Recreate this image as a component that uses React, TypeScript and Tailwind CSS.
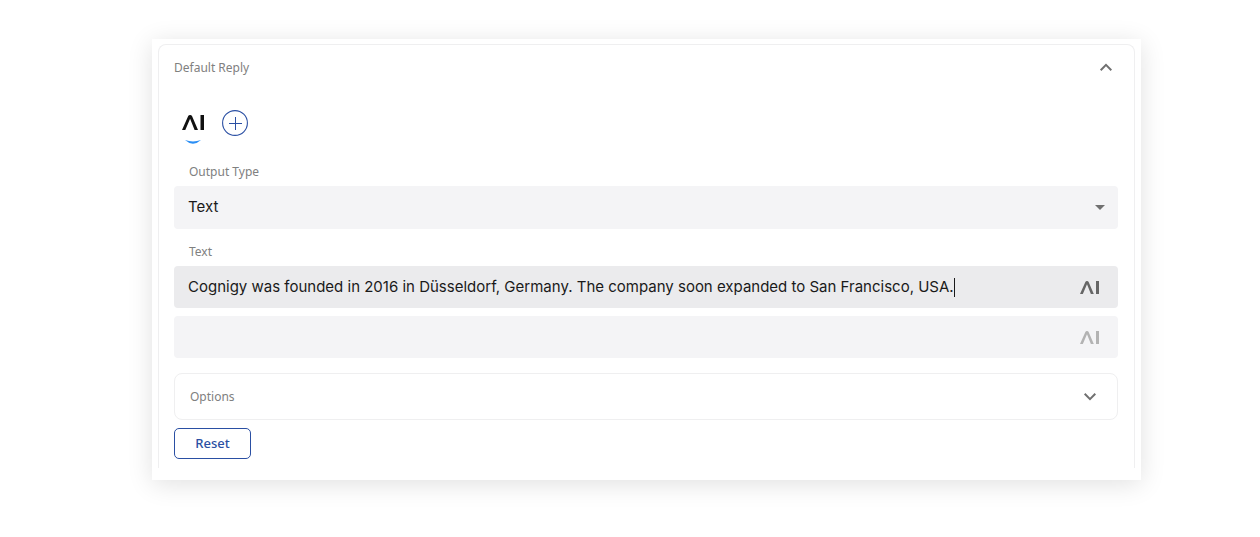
import { useState } from "react";

function AiMark({ className }: { className: string }) {
  return (
    <svg viewBox="0 0 22 15" fill="currentColor" aria-hidden="true" className={className}>
      <path d="M0 15 6.2 1.1Q6.7 0 8.1 0t1.9 1.1L16 15h-3.4L8.1 3.8 3.3 15z" />
      <path d="M18.5 0H22v15h-3.5z" />
    </svg>
  );
}

function Chevron({ up = false }: { up?: boolean }) {
  return (
    <svg viewBox="0 0 24 24" fill="none" stroke="currentColor" strokeWidth="2" aria-hidden="true" className="size-6 text-[#707070]">
      <path d={up ? "M6.7 14.2 12 8.9l5.3 5.3" : "M6.7 8.8l5.3 5.3 5.3-5.3"} />
    </svg>
  );
}

export default function App() {
  const [message, setMessage] = useState(
    "Cognigy was founded in 2016 in Düsseldorf, Germany. The company soon expanded to San Francisco, USA."
  );
  const [extra, setExtra] = useState("");

  return (
    <main className="bg-white pt-[39px] pr-[119px] pb-14 pl-[152px] font-['Noto_Sans',sans-serif] text-[#1a1a1a]">
      <div className="bg-white px-1.5 pt-[5px] pb-3 shadow-[0_4px_24px_rgba(0,0,0,0.12)]">
        <section className="rounded-t-lg border border-b-0 border-[#efeff0] pr-4 pb-[9px] pl-[15px]">
          <button type="button" aria-expanded="true" className="flex h-[45px] w-full items-center justify-between text-xs text-[#808080]">
            <span>Default Reply</span>
            <Chevron up />
          </button>

          <div className="mt-5 flex items-start gap-[18px] pl-2">
            <button type="button" aria-label="AI channel" className="flex flex-col items-center pt-[5px] text-[#111]">
              <AiMark className="h-[15px] w-[22px]" />
              <svg viewBox="0 0 16 4" aria-hidden="true" className="mt-2.5 h-1 w-4">
                <path d="M0 0Q8 2.8 16 0 8 7.4 0 0z" fill="#2b8ff5" />
              </svg>
            </button>
            <button type="button" aria-label="Add channel" className="text-[#2a4fa3]">
              <svg viewBox="0 0 26 26" fill="none" stroke="currentColor" aria-hidden="true" className="size-[26px]">
                <circle cx="13" cy="13" r="12.4" strokeWidth="1.1" />
                <path d="M7 13.5h13M13.5 7v13" />
              </svg>
            </button>
          </div>

          <label htmlFor="output-type" className="mt-5 block pl-[15px] text-xs text-[#808080]">
            Output Type
          </label>
          <div className="mt-1.5 grid items-center">
            <select id="output-type" defaultValue="Text" className="col-start-1 row-start-1 h-[43px] w-full appearance-none rounded bg-[#f4f4f6] px-3.5 font-['Inter',sans-serif] text-[15px] outline-none">
              <option>Text</option>
            </select>
            <svg viewBox="0 0 10 5" fill="currentColor" aria-hidden="true" className="pointer-events-none col-start-1 row-start-1 mr-[13px] h-[5px] w-2.5 justify-self-end text-[#707070]">
              <path d="M0 0h10L5 5z" />
            </svg>
          </div>

          <label htmlFor="message" className="mt-[15px] block pl-[15px] text-xs text-[#808080]">
            Text
          </label>
          <div className="mt-1.5 flex h-[42px] items-center rounded bg-[#ebebed] pr-[19px] pl-3.5">
            <input
              id="message"
              value={message}
              onChange={(event) => setMessage(event.target.value)}
              className="field-sizing-content min-w-0 bg-transparent font-['Inter',sans-serif] text-[15px] caret-transparent outline-none"
            />
            <span aria-hidden="true" className="h-[19px] w-px shrink-0 bg-[#1a1a1a]" />
            <button type="button" aria-label="Generate text" className="ml-auto shrink-0 text-[#666]">
              <AiMark className="h-[13px] w-[19px]" />
            </button>
          </div>
          <div className="mt-2 flex h-[42px] items-center rounded bg-[#f4f4f6] pr-[19px] pl-3.5">
            <input
              aria-label="Additional text"
              value={extra}
              onChange={(event) => setExtra(event.target.value)}
              className="min-w-0 flex-1 bg-transparent font-['Inter',sans-serif] text-[15px] outline-none"
            />
            <button type="button" aria-label="Generate additional text" className="shrink-0 text-[#b3b3b3]">
              <AiMark className="h-[13px] w-[19px]" />
            </button>
          </div>

          <button type="button" aria-expanded="false" className="mt-[15px] flex h-[47px] w-full items-center justify-between rounded-lg border border-[#efeff0] px-[15px] text-xs text-[#808080]">
            <span>Options</span>
            <Chevron />
          </button>
          <button type="button" className="mt-2 flex h-[31px] w-[77px] items-center justify-center rounded-[5px] border border-[#2a4fa3] text-[13px] font-medium text-[#2a4fa3]">
            Reset
          </button>
        </section>
      </div>
    </main>
  );
}
